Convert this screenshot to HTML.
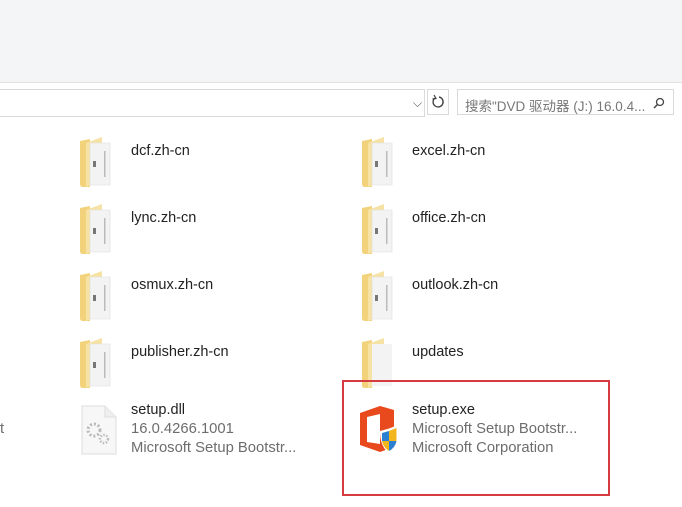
<!DOCTYPE html>
<html><head><meta charset="utf-8"><style>
body{margin:0;width:682px;height:507px;background:#fff;position:relative;overflow:hidden;font-family:"Liberation Sans","Noto Sans CJK SC",sans-serif;}
.top{position:absolute;left:0;top:0;width:682px;height:82px;background:#f4f5f7;border-bottom:1px solid #e3e3e3}
.addr{position:absolute;left:-2px;top:89px;width:426px;height:26px;border:1px solid #dadada;border-left:none}
.ref{position:absolute;left:427px;top:89px;width:22px;height:26px;border:1px solid #dadada;box-sizing:border-box}
.search{position:absolute;left:457px;top:89px;width:217px;height:26px;border:1px solid #dadada;box-sizing:border-box;font-size:13.5px;color:#777;padding:5px 0 0 7px}
.t{position:absolute;font-size:14.5px;color:#222;white-space:nowrap}
.g{position:absolute;font-size:14.8px;color:#6d6d6d;white-space:nowrap}
.f{position:absolute;width:32px;height:50px}
.box{position:absolute;left:342px;top:380px;width:264px;height:112px;border:2px solid #d63c3f}
</style></head><body>
<div class="top"></div>
<div class="addr"></div>
<div style="position:absolute;left:413px;top:96px;font-size:12px;color:#555">⌵</div>
<div class="ref"><svg width="20" height="24" viewBox="0 0 20 24"><path d="M7 8 A5 5 0 1 0 11 7" fill="none" stroke="#444" stroke-width="1.4"/><path d="M6 5 L8 8.5 L4.5 9" fill="none" stroke="#444" stroke-width="1.2"/></svg></div>
<div class="search">搜索"DVD 驱动器 (J:) 16.0.4...<svg style="position:absolute;right:8px;top:7px" width="12" height="12" viewBox="0 0 12 12"><circle cx="7" cy="5" r="3.5" fill="none" stroke="#444" stroke-width="1.3"/><path d="M4.5 7.5 L1 11" stroke="#444" stroke-width="1.5"/></svg></div>

<svg width="0" height="0" style="position:absolute"><defs><g id="fold"><path d="M0 4 L10 2 L10 50 L3 50 Q0 50 0 47Z" fill="#f2d27a"/><path d="M6 6 L22 0 L22 44 L6 50Z" fill="#f7e2a6"/><path d="M10 6 L30 6 L30 48 L10 48Z" fill="#f3f3f3" stroke="#ddd" stroke-width="0.6"/><rect x="13" y="24" width="3" height="6" fill="#777"/><rect x="24" y="14" width="1.5" height="26" fill="#bbb"/></g></defs></svg>

<svg class="f" style="left:80px;top:137px" viewBox="0 0 32 50"><use href="#fold"/></svg>
<svg class="f" style="left:362px;top:137px" viewBox="0 0 32 50"><use href="#fold"/></svg>
<svg class="f" style="left:80px;top:204px" viewBox="0 0 32 50"><use href="#fold"/></svg>
<svg class="f" style="left:362px;top:204px" viewBox="0 0 32 50"><use href="#fold"/></svg>
<svg class="f" style="left:80px;top:271px" viewBox="0 0 32 50"><use href="#fold"/></svg>
<svg class="f" style="left:362px;top:271px" viewBox="0 0 32 50"><use href="#fold"/></svg>
<svg class="f" style="left:80px;top:338px" viewBox="0 0 32 50"><use href="#fold"/></svg>
<svg class="f" style="left:362px;top:338px" viewBox="0 0 32 50"><path d="M0 4 L10 2 L10 50 L3 50 Q0 50 0 47Z" fill="#f2d27a"/><path d="M6 6 L22 0 L22 44 L6 50Z" fill="#f7e2a6"/><path d="M10 6 L30 6 L30 48 L10 48Z" fill="#f3f3f3"/></svg>

<div class="t" style="left:131px;top:143px">dcf.zh-cn</div>
<div class="t" style="left:412px;top:143px">excel.zh-cn</div>
<div class="t" style="left:131px;top:210px">lync.zh-cn</div>
<div class="t" style="left:412px;top:210px">office.zh-cn</div>
<div class="t" style="left:131px;top:277px">osmux.zh-cn</div>
<div class="t" style="left:412px;top:277px">outlook.zh-cn</div>
<div class="t" style="left:131px;top:344px">publisher.zh-cn</div>
<div class="t" style="left:412px;top:344px">updates</div>

<div class="g" style="left:0;top:421px">t</div>
<svg style="position:absolute;left:81px;top:405px" width="36" height="50" viewBox="0 0 36 50"><path d="M1 1 L24 1 L35 12 L35 49 L1 49Z" fill="#f7f7f7" stroke="#ddd"/><path d="M24 1 L24 12 L35 12" fill="#eee" stroke="#ddd"/><circle cx="13" cy="25" r="6" fill="none" stroke="#bbb" stroke-width="3" stroke-dasharray="2 2"/><circle cx="23" cy="34" r="4" fill="none" stroke="#bbb" stroke-width="2.5" stroke-dasharray="1.5 1.5"/></svg>
<div class="t" style="left:131px;top:402px">setup.dll</div>
<div class="g" style="left:131px;top:421px">16.0.4266.1001</div>
<div class="g" style="left:131px;top:440px">Microsoft Setup Bootstr...</div>

<div class="box"></div>
<svg style="position:absolute;left:358px;top:405px" width="48" height="50" viewBox="0 0 48 50"><path d="M2 8 L22 1 L36 5 L36 42 L22 47 L2 40Z" fill="#e8491d"/><path d="M9 12 L22 9 L22 39 L9 37Z" fill="#fff"/><path d="M22 26 Q31 24 40 20 Q41 40 31 48 Q22 42 22 26Z" fill="#fff"/><path d="M24 28 L31 26 L31 36 L24 36Z" fill="#2b7fd0"/><path d="M31 26 L38.5 23 L38.5 36 L31 36Z" fill="#f2b51c"/><path d="M24 36 L31 36 L31 46 Q25 42 24 36Z" fill="#f2b51c"/><path d="M31 36 L38.5 36 Q37 43 31 46Z" fill="#2b7fd0"/></svg>
<div class="t" style="left:412px;top:402px">setup.exe</div>
<div class="g" style="left:412px;top:421px">Microsoft Setup Bootstr...</div>
<div class="g" style="left:412px;top:440px">Microsoft Corporation</div>
</body></html>
